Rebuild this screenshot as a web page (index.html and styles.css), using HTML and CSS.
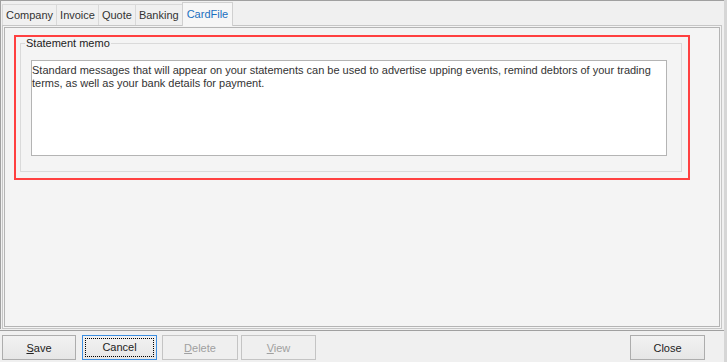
FILE: index.html
```html
<!DOCTYPE html>
<html lang="en">
<head>
  <meta charset="UTF-8">
  <title>CardFile</title>
  <link rel="stylesheet" href="styles.css">
</head>
<body>

  <div class="window">
    <div class="tabs">
      <div class="tab">Company</div>
      <div class="tab">Invoice</div>
      <div class="tab">Quote</div>
      <div class="tab">Banking</div>
      <div class="tab active">CardFile</div>
    </div>

    <div class="page">
      <div class="highlight">
        <fieldset class="group">
          <legend>Statement memo</legend>
          <div class="memo">Standard messages that will appear on your statements can be used to advertise upping events, remind debtors of your trading terms, as well as your bank details for payment.</div>
        </fieldset>
      </div>
    </div>
  </div>

  <div class="footer">
    <div class="left-buttons">
      <button class="btn save"><u>S</u>ave</button>
      <button class="btn focused"><span class="focus-ring">Cancel</span></button>
      <button class="btn delete" disabled><u>D</u>elete</button>
      <button class="btn view" disabled><u>V</u>iew</button>
    </div>
    <button class="btn">Close</button>
  </div>

</body>
</html>
```

FILE: styles.css
```css
body {
  margin: 0;
  width: 727px;
  height: 362px;
  background: #f0f0f0;
  font-family: 'Liberation Sans', Arial, sans-serif;
  font-size: 11px;
  color: #333;
  overflow: hidden;
  box-sizing: border-box;
  border-right: 3px solid #d6d6d6;
}

.window {
  border-top: 1px solid #a0a0a0;
  border-left: 1px solid #a0a0a0;
  padding: 0 1px 0 1px;
  height: 329px;
  box-sizing: border-box;
  display: flex;
  flex-direction: column;
}

.tabs {
  display: flex;
  align-items: flex-end;
  height: 24px;
  padding-top: 1px;
  box-sizing: border-box;
  position: relative;
  z-index: 1;
}

.tab {
  height: 21px;
  line-height: 20px;
  padding: 0 3px;
  border: 1px solid #d9d9d9;
  border-bottom: none;
  border-left: none;
  background: #f0f0f0;
  box-sizing: border-box;
  color: #333;
}

.tab:first-child {
  border-left: 1px solid #d9d9d9;
}

.tab.active {
  height: 24px;
  line-height: 22px;
  margin-bottom: -1px;
  background: #f6f6f6;
  border-color: #d0d0d0;
  border-left: 1px solid #d0d0d0;
  margin-left: -1px;
  color: #1a6fc0;
  padding: 0 4px;
}

.page {
  flex: 1;
  background: #f4f4f4;
  border: 1px solid #c6c6c6;
  outline: 1px solid #b4b4b4;
  outline-offset: -3px;
  padding: 9px 0 0 11px;
  margin-right: 1px;
}

.highlight {
  width: 676px;
  height: 145px;
  border: 2px solid #ff4040;
  box-sizing: border-box;
  padding: 0 6px 0 4px;
}

.group {
  margin: 0;
  height: 135px;
  box-sizing: border-box;
  border: 1px solid #dadada;
  padding: 11px 14px 0 10px;
}

.group legend {
  padding: 0 1px;
  margin-left: -6px;
  color: #222;
  line-height: 12px;
}

.memo {
  height: 96px;
  box-sizing: border-box;
  background: #fff;
  border: 1px solid #b4b4b4;
  padding: 3px 0;
  line-height: 13px;
  color: #333;
}

.footer {
  border-top: 1px solid #a0a0a0;
  margin-top: 1px;
  padding: 4px 19px 0 2px;
  display: flex;
  justify-content: space-between;
}

.left-buttons {
  display: flex;
  gap: 6px;
}

.btn {
  width: 75px;
  height: 25px;
  font-family: 'Liberation Sans', Arial, sans-serif;
  font-size: 11px;
  color: #222;
  background: linear-gradient(#f2f2f2, #e6e6e6);
  border: 1px solid #adadad;
  padding: 0;
  margin: 0;
}

.btn.save {
  width: 74px;
}

.btn:disabled {
  color: #a0a0a0;
  background: #efefef;
  border-color: #c4c4c4;
}

.btn.focused {
  border-color: #3c8ee0;
  padding: 2px;
}

.focus-ring {
  display: block;
  height: 100%;
  line-height: 17px;
  border: 1px dotted #000;
  box-sizing: border-box;
}

.btn.delete {
  width: 76px;
  margin-left: -1px;
}

.btn.view {
  margin-left: -3px;
}
```
